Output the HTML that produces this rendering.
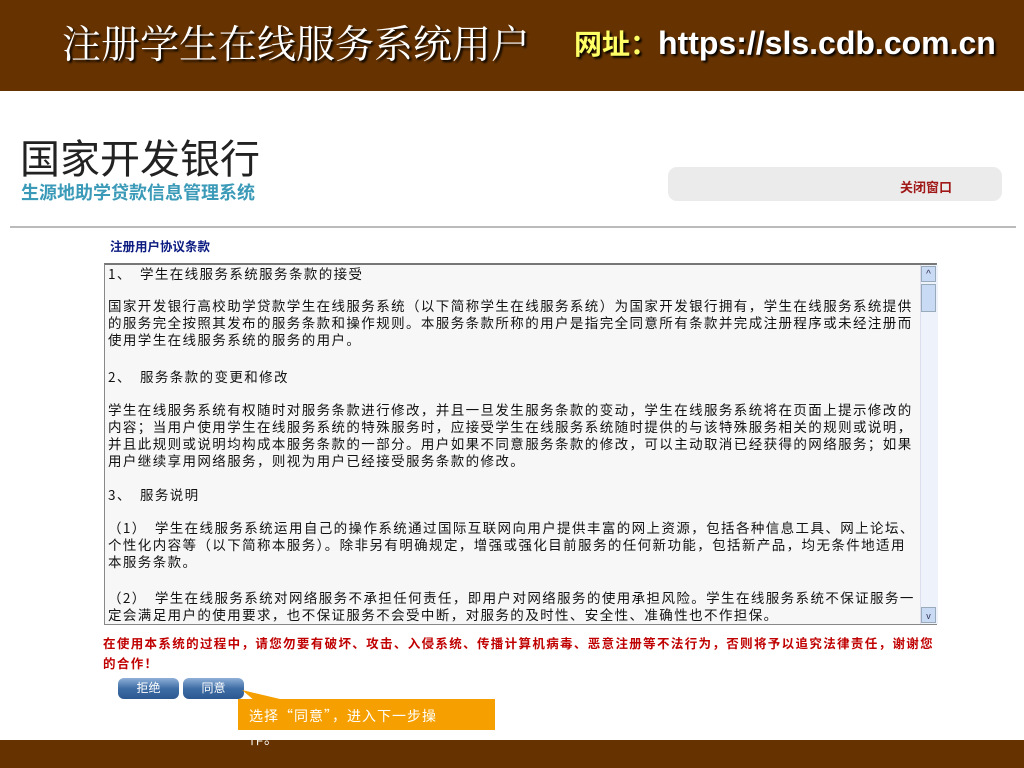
<!DOCTYPE html>
<html><head><meta charset="utf-8"><style>
body{margin:0;width:1024px;height:768px;overflow:hidden;background:#fff;position:relative;font-family:"Liberation Sans","Noto Sans CJK SC",sans-serif;}
.hdr{position:absolute;left:0;top:0;width:1024px;height:91px;background:#663300;}
.t1{position:absolute;left:62px;top:14px;font-family:"Liberation Serif","Noto Serif CJK SC",serif;font-size:39px;color:#fff;text-shadow:2px 2px 2px #000;white-space:nowrap}
.t2{position:absolute;left:574px;top:23px;font-size:32px;font-weight:bold;color:#fff;text-shadow:2px 2px 2px #000;white-space:nowrap}
.t2 span{color:#ffff66;font-family:"Noto Sans CJK SC",sans-serif;font-weight:bold;font-size:28px}
.ftr{position:absolute;left:0;top:740px;width:1024px;height:28px;background:#663300;}
.abs{position:absolute;white-space:nowrap}
.box{position:absolute;left:104px;top:263px;width:833px;height:362px;border:1px solid #888;border-top:2px solid #777;background:#f7f7f7;box-sizing:border-box}
.ln{position:absolute;left:108px;font-size:13.5px;letter-spacing:1.4px;color:#111;white-space:nowrap;font-family:"Noto Sans CJK SC",sans-serif;line-height:17px}
.sb{position:absolute;left:920px;top:265px;width:17px;height:359px;background:#eef3fb;border-left:1px solid #dde}
</style></head><body>
<div class="hdr"></div>
<div class="t1">注册学生在线服务系统用户</div>
<div class="t2"><span>网址：</span>https://sls.cdb.com.cn</div>
<div class="abs" style="left:20px;top:132px;font-size:40px;color:#222;font-family:'Noto Sans CJK SC',sans-serif;line-height:48px">国家开发银行</div>
<div class="abs" style="left:21px;top:179px;font-size:18px;color:#3a9ab8;font-weight:bold;font-family:'Noto Sans CJK SC',sans-serif">生源地助学贷款信息管理系统</div>
<div style="position:absolute;left:668px;top:167px;width:334px;height:34px;background:#ebebeb;border-radius:9px"></div>
<div class="abs" style="left:900px;top:177px;font-size:13px;font-weight:bold;color:#a01818;font-family:'Noto Sans CJK SC',sans-serif">关闭窗口</div>
<div style="position:absolute;left:10px;top:226px;width:1006px;height:2px;background:#bbb"></div>
<div class="abs" style="left:110px;top:236px;font-size:12.5px;font-weight:bold;color:#0a1a80;font-family:'Noto Sans CJK SC',sans-serif">注册用户协议条款</div>
<div class="box"></div>
<div class="sb"></div>
<div style="position:absolute;left:921px;top:266px;width:15px;height:16px;background:#c9daf5;border:1px solid #9ab;box-sizing:border-box;font-size:10px;text-align:center;color:#335;line-height:16px">^</div>
<div style="position:absolute;left:921px;top:284px;width:15px;height:28px;background:#c9daf5;border:1px solid #9ab;box-sizing:border-box"></div>
<div style="position:absolute;left:921px;top:607px;width:15px;height:16px;background:#c9daf5;border:1px solid #9ab;box-sizing:border-box;font-size:9px;text-align:center;color:#335;line-height:16px">v</div>
<div class="ln" style="top:265px">1、　学生在线服务系统服务条款的接受</div>
<div class="ln" style="top:297px">国家开发银行高校助学贷款学生在线服务系统（以下简称学生在线服务系统）为国家开发银行拥有，学生在线服务系统提供</div>
<div class="ln" style="top:314px">的服务完全按照其发布的服务条款和操作规则。本服务条款所称的用户是指完全同意所有条款并完成注册程序或未经注册而</div>
<div class="ln" style="top:331px">使用学生在线服务系统的服务的用户。</div>
<div class="ln" style="top:368px">2、　服务条款的变更和修改</div>
<div class="ln" style="top:401px">学生在线服务系统有权随时对服务条款进行修改，并且一旦发生服务条款的变动，学生在线服务系统将在页面上提示修改的</div>
<div class="ln" style="top:418px">内容；当用户使用学生在线服务系统的特殊服务时，应接受学生在线服务系统随时提供的与该特殊服务相关的规则或说明，</div>
<div class="ln" style="top:435px">并且此规则或说明均构成本服务条款的一部分。用户如果不同意服务条款的修改，可以主动取消已经获得的网络服务；如果</div>
<div class="ln" style="top:452px">用户继续享用网络服务，则视为用户已经接受服务条款的修改。</div>
<div class="ln" style="top:486px">3、　服务说明</div>
<div class="ln" style="top:519px">（1）　学生在线服务系统运用自己的操作系统通过国际互联网向用户提供丰富的网上资源，包括各种信息工具、网上论坛、</div>
<div class="ln" style="top:536px">个性化内容等（以下简称本服务）。除非另有明确规定，增强或强化目前服务的任何新功能，包括新产品，均无条件地适用</div>
<div class="ln" style="top:553px">本服务条款。</div>
<div class="ln" style="top:589px">（2）　学生在线服务系统对网络服务不承担任何责任，即用户对网络服务的使用承担风险。学生在线服务系统不保证服务一</div>
<div class="ln" style="top:606px">定会满足用户的使用要求，也不保证服务不会受中断，对服务的及时性、安全性、准确性也不作担保。</div>
<div class="abs" style="left:103px;top:633px;font-size:12.5px;font-weight:bold;color:#c00000;font-family:'Noto Sans CJK SC',sans-serif;line-height:20px;letter-spacing:1.35px">在使用本系统的过程中，请您勿要有破坏、攻击、入侵系统、传播计算机病毒、恶意注册等不法行为，否则将予以追究法律责任，谢谢您<br>的合作！</div>
<div style="position:absolute;left:118px;top:678px;width:61px;height:21px;border-radius:6px;background:linear-gradient(#8fb0d8,#3e6da5 50%,#2c5890);color:#fff;font-size:12px;text-align:center;line-height:20px;font-family:'Noto Sans CJK SC',sans-serif">拒绝</div>
<div style="position:absolute;left:183px;top:678px;width:61px;height:21px;border-radius:6px;background:linear-gradient(#8fb0d8,#3e6da5 50%,#2c5890);color:#fff;font-size:12px;text-align:center;line-height:20px;font-family:'Noto Sans CJK SC',sans-serif">同意</div>
<svg style="position:absolute;left:0;top:0" width="1024" height="768"><polygon points="242,690 280,699 255,701" fill="#f5a000"/></svg>
<div class="ftr"></div>
<div style="position:absolute;left:238px;top:699px;width:257px;height:31px;background:#f5a000"></div>
<div class="abs" style="left:249px;top:705px;font-size:14px;color:#fff;font-family:'Noto Sans CJK SC',sans-serif;line-height:23px;letter-spacing:1px">选择“同意”，进入下一步操<br>作。</div>
</body></html>
